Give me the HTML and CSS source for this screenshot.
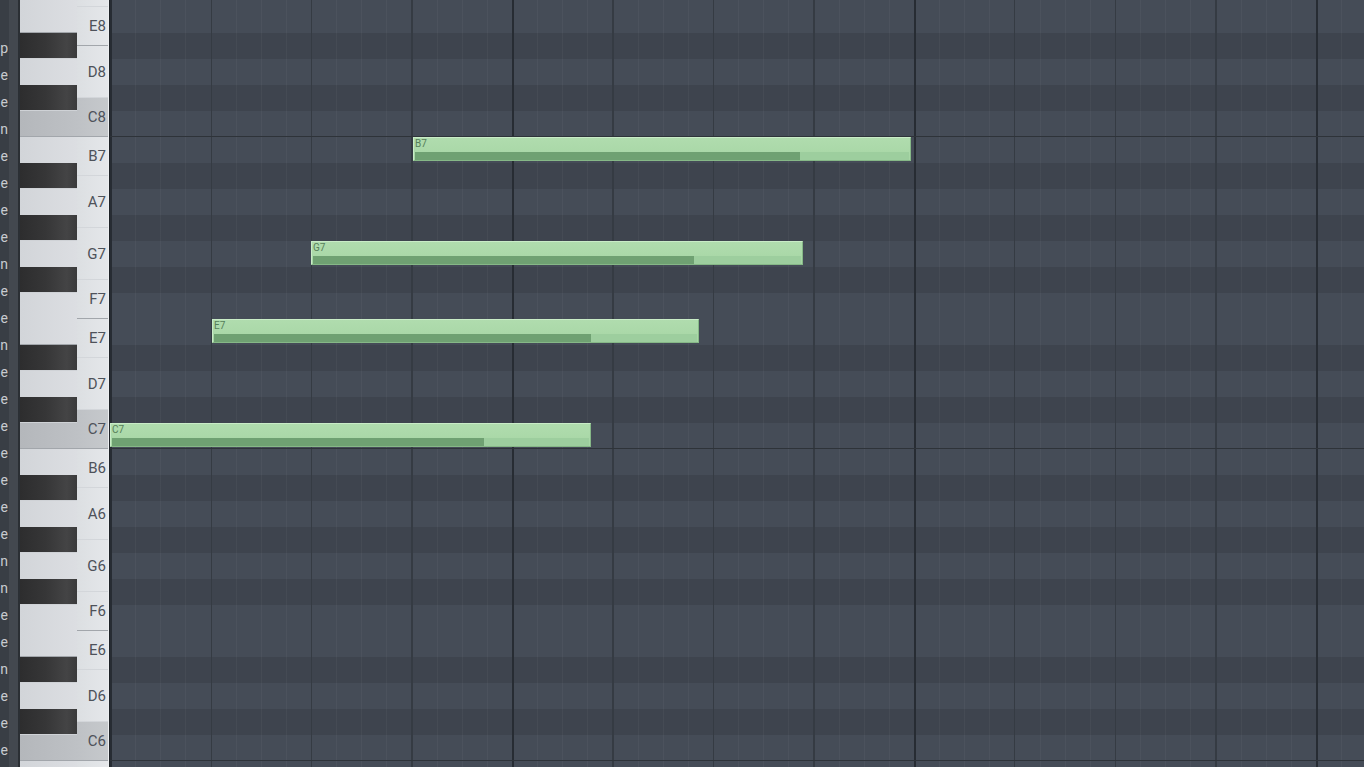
FILE: index.html
```html
<!DOCTYPE html>
<html lang="en">
<head>
    <meta charset="UTF-8">
    <meta name="viewport" content="width=device-width, initial-scale=1.0">
    <title>Piano Roll</title>
    <link rel="stylesheet" href="styles.css">
</head>
<body>
    <div class="roll">
        <!-- clipped channel names on the far left -->
        <div class="side">
            <div class="side-names">
                <span>p</span><span>e</span><span>e</span><span>n</span><span>e</span>
                <span>e</span><span>e</span><span>e</span><span>n</span><span>e</span>
                <span>e</span><span>n</span><span>e</span><span>e</span><span>e</span>
                <span>e</span><span>e</span><span>e</span><span>e</span><span>n</span>
                <span>n</span><span>e</span><span>e</span><span>n</span><span>e</span>
                <span>e</span><span>e</span>
            </div>
            <div class="side-strip"></div>
        </div>

        <!-- keyboard -->
        <div class="keys">
            <div class="kcol left">
                <div class="kc w"></div>
                <div class="kc w sep"></div>
                <div class="kc b"></div>
                <div class="kc w"></div>
                <div class="kc b"></div>
                <div class="kc w c sep"></div>
                <div class="kc w"></div>
                <div class="kc b"></div>
                <div class="kc w"></div>
                <div class="kc b"></div>
                <div class="kc w"></div>
                <div class="kc b"></div>
                <div class="kc w"></div>
                <div class="kc w sep"></div>
                <div class="kc b"></div>
                <div class="kc w"></div>
                <div class="kc b"></div>
                <div class="kc w c sep"></div>
                <div class="kc w"></div>
                <div class="kc b"></div>
                <div class="kc w"></div>
                <div class="kc b"></div>
                <div class="kc w"></div>
                <div class="kc b"></div>
                <div class="kc w"></div>
                <div class="kc w sep"></div>
                <div class="kc b"></div>
                <div class="kc w"></div>
                <div class="kc b"></div>
                <div class="kc w c sep"></div>
                <div class="kc w"></div>
            </div>
            <div class="kcol right">
                <div class="wk top"></div>
                <div class="wk s sep">E8</div>
                <div class="wk l">D8</div>
                <div class="wk s c sep">C8</div>
                <div class="wk s">B7</div>
                <div class="wk l">A7</div>
                <div class="wk l">G7</div>
                <div class="wk s sep">F7</div>
                <div class="wk s">E7</div>
                <div class="wk l">D7</div>
                <div class="wk s c sep">C7</div>
                <div class="wk s">B6</div>
                <div class="wk l">A6</div>
                <div class="wk l">G6</div>
                <div class="wk s sep">F6</div>
                <div class="wk s">E6</div>
                <div class="wk l">D6</div>
                <div class="wk s c sep">C6</div>
                <div class="wk s"></div>
            </div>
            <div class="keys-edge"></div>
        </div>

        <!-- note grid -->
        <div class="grid">
            <div class="row w"></div>
            <div class="row w"></div>
            <div class="row b"></div>
            <div class="row w"></div>
            <div class="row b"></div>
            <div class="row w oct"></div>
            <div class="row w">
                <div class="note" style="margin-left: 303px; width: 498px;">
                    <div class="note-label">B7</div>
                    <div class="note-vel"><span style="width: 78%;"></span></div>
                </div>
            </div>
            <div class="row b"></div>
            <div class="row w"></div>
            <div class="row b"></div>
            <div class="row w">
                <div class="note" style="margin-left: 201px; width: 492px;">
                    <div class="note-label">G7</div>
                    <div class="note-vel"><span style="width: 78%;"></span></div>
                </div>
            </div>
            <div class="row b"></div>
            <div class="row w"></div>
            <div class="row w">
                <div class="note" style="margin-left: 102px; width: 487px;">
                    <div class="note-label">E7</div>
                    <div class="note-vel"><span style="width: 78%;"></span></div>
                </div>
            </div>
            <div class="row b"></div>
            <div class="row w"></div>
            <div class="row b"></div>
            <div class="row w oct">
                <div class="note" style="margin-left: 0px; width: 481px;">
                    <div class="note-label">C7</div>
                    <div class="note-vel"><span style="width: 78%;"></span></div>
                </div>
            </div>
            <div class="row w"></div>
            <div class="row b"></div>
            <div class="row w"></div>
            <div class="row b"></div>
            <div class="row w"></div>
            <div class="row b"></div>
            <div class="row w"></div>
            <div class="row w"></div>
            <div class="row b"></div>
            <div class="row w"></div>
            <div class="row b"></div>
            <div class="row w oct"></div>
            <div class="row w"></div>
        </div>
    </div>
</body>
</html>
```

FILE: styles.css
```css
body {
    margin: 0;
    background: #3f454e;
    overflow: hidden;
    font-family: Roboto, "Liberation Sans", sans-serif;
}
.roll {
    display: flex;
    height: 767px;
    overflow: hidden;
}

/* left strip */
.side {
    width: 20px;
    flex-shrink: 0;
    display: flex;
    background: #393e45;
}
.side-names {
    width: 9px;
    overflow: hidden;
    padding-top: 35px;
    display: flex;
    flex-direction: column;
}
.side-names span {
    height: 27px;
    line-height: 27px;
    font-size: 14px;
    color: #c8cbcf;
    text-align: right;
    padding-right: 1px;
}
.side-strip {
    width: 9px;
    background: #43484f;
    border-right: 2px solid #2b2f34;
}

/* keyboard */
.keys {
    width: 90px;
    flex-shrink: 0;
    display: flex;
}
.kcol {
    margin-top: -19px;
    display: flex;
    flex-direction: column;
}
.kcol.left {
    width: 57px;
}
.kcol.right {
    width: 31px;
}
.kc {
    height: 26px;
    flex-shrink: 0;
    box-sizing: border-box;
}
.kc.w {
    background: linear-gradient(to right, #d2d5d9, #dcdee2);
}
.kc.c {
    background: linear-gradient(to right, #b4b7bb, #bec1c5);
}
.kc.b {
    background: linear-gradient(to right, #2d2d2e, #363637 45%, #444445 82%, #3a3a3b);
    border-bottom: 1px solid #cfd2d6;
}
.kc.sep {
    border-bottom: 1px solid #a2a6ab;
}
.wk {
    flex-shrink: 0;
    box-sizing: border-box;
    display: flex;
    align-items: center;
    justify-content: flex-end;
    padding-right: 2px;
    font-size: 15px;
    color: #4e525a;
    background: linear-gradient(to right, #dcdfe2, #e5e7ea);
    border-bottom: 1px solid #d3d6da;
}
.wk.top {
    height: 26px;
}
.wk.s {
    height: 39px;
}
.wk.l {
    height: 52px;
}
.wk.c {
    background: linear-gradient(to right, #bec1c5, #c6c9cc);
}
.wk.sep {
    border-bottom-color: #a2a6ab;
}
.keys-edge {
    width: 2px;
    background: #1f2328;
    border-left: 1px solid #eceef0;
    box-sizing: border-box;
}

/* grid */
.grid {
    flex: 1;
    margin-top: -19px;
    display: flex;
    flex-direction: column;
}
.row {
    --row: #454c57;
    height: 26px;
    flex-shrink: 0;
    box-sizing: border-box;
    display: flex;
    align-items: flex-start;
    background:
        repeating-linear-gradient(to right, #272c33 0 2px, transparent 2px 402px),
        repeating-linear-gradient(to right, #353b43 0 1px, transparent 1px 100.5px),
        repeating-linear-gradient(to right, rgba(255, 255, 255, 0.035) 0 1px, transparent 1px 25.125px),
        var(--row);
}
.row.b {
    --row: #3e444e;
}
.row.oct {
    box-shadow: inset 0 -1px 0 #2e3339;
}

/* notes */
.note {
    height: 24px;
    flex-shrink: 0;
    box-sizing: border-box;
    display: flex;
    flex-direction: column;
    background: linear-gradient(#b0dcae, #a6d6a4);
    border: 1px solid #c9ecc7;
    border-right-color: #86b887;
    border-bottom-color: #86b887;
}
.note-label {
    height: 14px;
    line-height: 12px;
    padding-left: 1px;
    font-size: 10px;
    color: #567f59;
}
.note-vel {
    flex: 1;
    margin: 0 1px;
    background: #9dce9e;
}
.note-vel span {
    display: block;
    height: 100%;
    background: #6fa172;
}
```
